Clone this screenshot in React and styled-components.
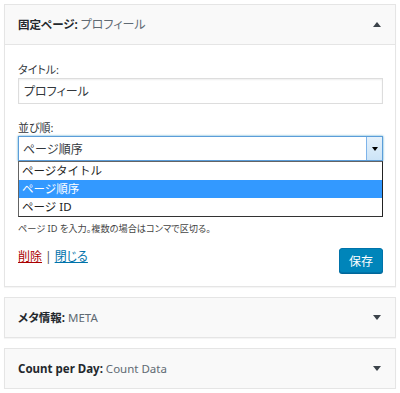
import React from 'react';
import styled, { createGlobalStyle } from 'styled-components';

const FONT = `"Noto Sans", "Noto Sans CJK JP", sans-serif`;

const GlobalStyle = createGlobalStyle`
  html, body { margin: 0; padding: 0; background: #fff; }
  body { font-family: ${FONT}; color: #23282d; font-size: 11px; }
  * { box-sizing: border-box; }
`;

const Page = styled.div`
  display: flex;
  flex-direction: column;
  gap: 10px;
  width: 396px;
  padding: 4px 0 0 4px;
`;

const Panel = styled.section`
  width: 392px;
  background: #fff;
  border: 1px solid #e5e5e5;
  box-shadow: 0 1px 1px rgba(0, 0, 0, 0.04);
`;

const Header = styled.div`
  height: ${p => (p.$open ? 40 : 39)}px;
  display: flex;
  align-items: center;
  justify-content: space-between;
  padding: 0 14px 0 13px;
  background: #f9f9f9;
  border-bottom: ${p => (p.$open ? '1px solid #e5e5e5' : 'none')};
`;

const Title = styled.h3`
  margin: 0;
  font-size: 11.5px;
  font-weight: 700;
  color: #23282d;
  font-feature-settings: "palt";
  line-height: 16px;
`;

const Sub = styled.span`
  font-weight: 400;
  color: #606a73;
  font-size: ${p => p.$size || 'inherit'};
`;

const Toggle = styled.span`
  width: 0;
  height: 0;
  border-left: 4px solid transparent;
  border-right: 4px solid transparent;
  ${p => (p.$up ? 'border-bottom: 5px solid #3c434a;' : 'border-top: 5px solid #3c434a;')}
`;

const Body = styled.div`
  padding: 17px 12px 13px 13px;
`;

const Label = styled.label`
  display: block;
  height: 16px;
  font-size: 11px;
  line-height: 16px;
  color: #32373c;
  font-feature-settings: "palt";
`;

const Field = styled.div`
  margin-top: ${p => p.$gap || 0}px;
`;

const TextInput = styled.div`
  height: 26px;
  border: 1px solid #ddd;
  box-shadow: inset 0 1px 2px rgba(0, 0, 0, 0.07);
  padding: 0 5px;
  display: flex;
  align-items: center;
  font-size: 12px;
  color: #32373c;
  background: #fff;
  font-feature-settings: "palt";
`;

const SelectWrap = styled.div`
  position: relative;
`;

const SelectBox = styled.div`
  height: 25px;
  border: 1px solid #5b9dd9;
  box-shadow: 0 0 2px rgba(30, 140, 190, 0.8);
  display: flex;
  align-items: center;
  justify-content: space-between;
  background: #fff;
  font-size: 12px;
  color: #32373c;
  padding-left: 4px;
`;

const DropButton = styled.span`
  width: 16px;
  align-self: stretch;
  background: linear-gradient(#e5f1fb, #cce4f7);
  border-left: 1px solid #7eb4ea;
  display: flex;
  align-items: center;
  justify-content: center;
`;

const DropTri = styled.span`
  width: 0;
  height: 0;
  border-left: 3.5px solid transparent;
  border-right: 3.5px solid transparent;
  border-top: 4px solid #000;
`;

const List = styled.ul`
  position: absolute;
  top: 100%;
  left: 0;
  right: 0;
  margin: 0;
  padding: 0;
  list-style: none;
  background: #fff;
  border: 1px solid #646464;
  border-right-color: #222;
  border-bottom-color: #333;
  z-index: 5;
`;

const Option = styled.li`
  height: 18px;
  line-height: 18px;
  padding-left: 3px;
  font-size: 11.5px;
  color: ${p => (p.$selected ? '#fff' : '#222')};
  background: ${p => (p.$selected ? '#3399ff' : '#fff')};
`;

const Help = styled.p`
  margin: 10px 0 0;
  font-size: 9.2px;
  line-height: 14px;
  color: #444;
  font-feature-settings: "palt";
`;

const Actions = styled.div`
  margin-top: 12px;
  display: flex;
  justify-content: space-between;
  align-items: flex-start;
`;

const Links = styled.div`
  line-height: 18px;
  font-size: 12px;
  color: #444;
  font-feature-settings: "palt";
`;

const Link = styled.a`
  color: ${p => (p.$danger ? '#a00' : '#0073aa')};
  text-decoration: underline;
  cursor: pointer;
`;

const Sep = styled.span`
  margin: 0 3px;
  color: #555;
`;

const SaveButton = styled.button`
  width: 44px;
  height: 25px;
  padding: 0;
  border: 1px solid #0073aa;
  border-radius: 3px;
  background: #0085ba;
  box-shadow: 0 1px 0 #006799;
  color: #fff;
  font-family: ${FONT};
  font-size: 12px;
  cursor: pointer;
`;

export default function App() {
  return (
    <>
      <GlobalStyle />
      <Page>
        <Panel>
          <Header $open>
            <Title>
              固定ページ: <Sub $size="12px">プロフィール</Sub>
            </Title>
            <Toggle $up />
          </Header>
          <Body>
            <Label>タイトル:</Label>
            <TextInput>プロフィール</TextInput>

            <Field $gap={16}>
              <Label>並び順:</Label>
              <SelectWrap>
                <SelectBox>
                  <span>ページ順序</span>
                  <DropButton>
                    <DropTri />
                  </DropButton>
                </SelectBox>
                <List>
                  <Option>ページタイトル</Option>
                  <Option $selected>ページ順序</Option>
                  <Option>ページ ID</Option>
                </List>
              </SelectWrap>
            </Field>

            {/* exclude field: hidden underneath the open dropdown list */}
            <Field $gap={9}>
              <Label aria-hidden="true" />
              <TextInput />
              <Help>ページ ID を入力。複数の場合はコンマで区切る。</Help>
            </Field>

            <Actions>
              <Links>
                <Link $danger>削除</Link>
                <Sep>|</Sep>
                <Link>閉じる</Link>
              </Links>
              <SaveButton>保存</SaveButton>
            </Actions>
          </Body>
        </Panel>

        <Panel>
          <Header>
            <Title>
              メタ情報: <Sub>META</Sub>
            </Title>
            <Toggle />
          </Header>
        </Panel>

        <Panel>
          <Header>
            <Title>
              Count per Day: <Sub>Count Data</Sub>
            </Title>
            <Toggle />
          </Header>
        </Panel>
      </Page>
    </>
  );
}
